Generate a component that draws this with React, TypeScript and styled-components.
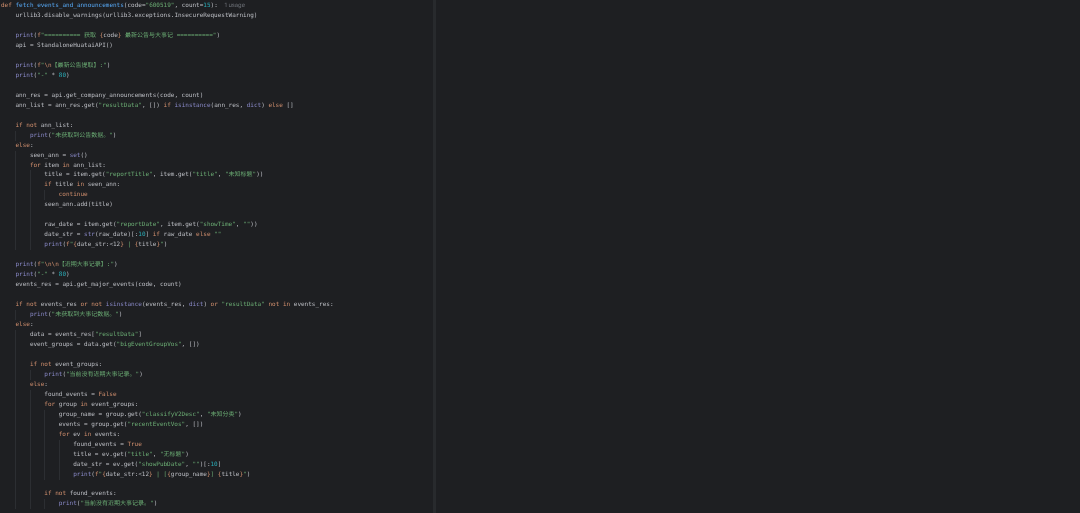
import React from 'react';
import styled, { createGlobalStyle } from 'styled-components';

const SOURCE = `def fetch_events_and_announcements(code="600519", count=15):
    urllib3.disable_warnings(urllib3.exceptions.InsecureRequestWarning)

    print(f"========== 获取 {code} 最新公告与大事记 ==========")
    api = StandaloneHuataiAPI()

    print(f"\\n【最新公告提取】:")
    print("-" * 80)

    ann_res = api.get_company_announcements(code, count)
    ann_list = ann_res.get("resultData", []) if isinstance(ann_res, dict) else []

    if not ann_list:
        print("未获取到公告数据。")
    else:
        seen_ann = set()
        for item in ann_list:
            title = item.get("reportTitle", item.get("title", "未知标题"))
            if title in seen_ann:
                continue
            seen_ann.add(title)

            raw_date = item.get("reportDate", item.get("showTime", ""))
            date_str = str(raw_date)[:10] if raw_date else ""
            print(f"{date_str:<12} | {title}")

    print(f"\\n\\n【近期大事记录】:")
    print("-" * 80)
    events_res = api.get_major_events(code, count)

    if not events_res or not isinstance(events_res, dict) or "resultData" not in events_res:
        print("未获取到大事记数据。")
    else:
        data = events_res["resultData"]
        event_groups = data.get("bigEventGroupVos", [])

        if not event_groups:
            print("当前没有近期大事记录。")
        else:
            found_events = False
            for group in event_groups:
                group_name = group.get("classifyV2Desc", "未知分类")
                events = group.get("recentEventVos", [])
                for ev in events:
                    found_events = True
                    title = ev.get("title", "无标题")
                    date_str = ev.get("showPubDate", "")[:10]
                    print(f"{date_str:<12} | [{group_name}] {title}")

            if not found_events:
                print("当前没有近期大事记录。")`;

type Kind = 'plain' | 'keyword' | 'fn' | 'string' | 'number' | 'builtin';

const COLORS: Record<Kind, string> = {
  plain: '#bcbec4',
  keyword: '#cf8e6d',
  fn: '#56a8f5',
  string: '#6aab73',
  number: '#2aacb8',
  builtin: '#8888c6',
};

const TOKEN =
  /(f?"[^"]*")|\b(def|if|not|else|for|in|or|continue|False|True)\b|\b(print|set|str|isinstance|dict)\b|\b(\d+)\b|\b(fetch_events_and_announcements)\b/g;

const Page = createGlobalStyle`
  html, body {
    margin: 0;
    height: 100%;
    background: #1e1f22;
  }
  #root {
    height: 100%;
  }
`;

const Window = styled.div`
  display: flex;
  width: 1080px;
  height: 513px;
  overflow: hidden;
  background: #1e1f22;
`;

const Editor = styled.div`
  width: 433px;
  padding: 1px 0 0 1px;
  box-sizing: border-box;
  font-family: "DejaVu Sans Mono", "Noto Sans CJK SC", monospace;
  font-size: 6px;
  text-rendering: geometricPrecision;
  filter: blur(0.45px);
`;

const Divider = styled.div`
  width: 3px;
  background: #282a2d;
`;

const EmptyPane = styled.div`
  flex: 1;
`;

const Line = styled.div`
  display: flex;
  align-items: baseline;
  height: 9.97px;
  line-height: 9.97px;
  white-space: pre;
`;

const Guide = styled.span`
  width: 4ch;
  flex: none;
  align-self: stretch;
  box-sizing: border-box;
  border-left: 1px solid #2c2e32;
  &:first-child {
    border-left-color: transparent;
  }
`;

const Code = styled.span`
  flex: none;
`;

const Token = styled.span<{ $kind: Kind }>`
  color: ${(p) => COLORS[p.$kind]};
`;

const Usage = styled.span`
  margin-left: 1.8ch;
  font-family: "Inter", "Noto Sans", sans-serif;
  font-size: 5.8px;
  color: #6f737a;
`;

// f-string body: braces and escapes are orange, what sits in braces is plain
const renderFString = (text: string, key: number) =>
  text.split(/(\{[^}]*\}|\\n)/).map((part, i) => {
    if (part === '\\n') {
      return <Token key={`${key}-${i}`} $kind="keyword">{part}</Token>;
    }
    if (part.startsWith('{')) {
      return (
        <React.Fragment key={`${key}-${i}`}>
          <Token $kind="keyword">{'{'}</Token>
          <Token $kind="plain">{part.slice(1, -1)}</Token>
          <Token $kind="keyword">{'}'}</Token>
        </React.Fragment>
      );
    }
    return <Token key={`${key}-${i}`} $kind="string">{part}</Token>;
  });

const highlight = (text: string) => {
  const out: React.ReactNode[] = [];
  let last = 0;
  for (const m of text.matchAll(TOKEN)) {
    const at = m.index ?? 0;
    if (at > last) {
      out.push(<Token key={`p${at}`} $kind="plain">{text.slice(last, at)}</Token>);
    }
    if (m[1] && m[1].startsWith('f')) {
      out.push(<Token key={`f${at}`} $kind="keyword">f</Token>);
      out.push(...renderFString(m[1].slice(1), at));
    } else {
      const kind: Kind = m[1]
        ? 'string'
        : m[2]
          ? 'keyword'
          : m[3]
            ? 'builtin'
            : m[4]
              ? 'number'
              : 'fn';
      out.push(<Token key={`t${at}`} $kind={kind}>{m[0]}</Token>);
    }
    last = at + m[0].length;
  }
  if (last < text.length) {
    out.push(<Token key="end" $kind="plain">{text.slice(last)}</Token>);
  }
  return out;
};

const lines = SOURCE.split('\n');
const indentOf = (s: string) => Math.floor((s.length - s.trimStart().length) / 4);

// blank lines keep the guides that both neighbours have
const levelOf = (i: number) => {
  if (lines[i].trim()) return indentOf(lines[i]);
  return Math.min(indentOf(lines[i - 1]), indentOf(lines[i + 1]));
};

const App = () => (
  <>
    <Page />
    <Window>
      <Editor>
        {lines.map((line, i) => {
          const level = levelOf(i);
          return (
            <Line key={i}>
              {Array.from({ length: level }, (_, g) => (
                <Guide key={g} />
              ))}
              <Code>{highlight(line.trim())}</Code>
              {i === 0 && <Usage>1 usage</Usage>}
            </Line>
          );
        })}
      </Editor>
      <Divider />
      <EmptyPane />
    </Window>
  </>
);

export default App;
